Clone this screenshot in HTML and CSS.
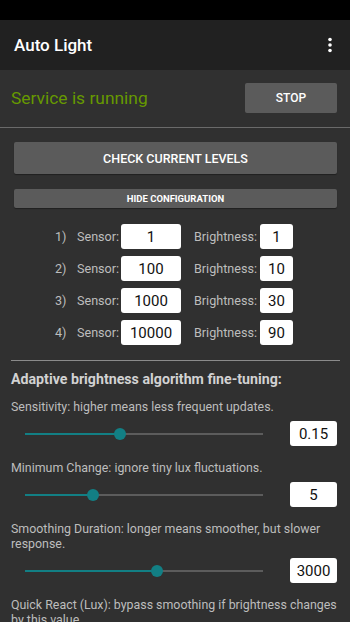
FILE: index.html
```html
<!DOCTYPE html>
<html lang="en">
<head>
    <meta charset="UTF-8">
    <meta name="viewport" content="width=device-width, initial-scale=1.0">
    <title>Auto Light</title>
    <link rel="stylesheet" href="styles.css">
</head>
<body>
    <div class="status-bar"></div>

    <header class="app-bar">
        <h1>Auto Light</h1>
        <svg class="menu-icon" width="6" height="16" viewBox="0 0 6 16">
            <circle cx="3" cy="2.5" r="1.8" fill="#fff"/>
            <circle cx="3" cy="8" r="1.8" fill="#fff"/>
            <circle cx="3" cy="13.5" r="1.8" fill="#fff"/>
        </svg>
    </header>

    <main class="content">
        <div class="service-row">
            <div class="service-text">Service is running</div>
            <button class="btn btn-stop">STOP</button>
        </div>
        <div class="divider-full"></div>

        <div class="panel">
            <button class="btn btn-check">CHECK CURRENT LEVELS</button>
            <button class="btn btn-hide">HIDE CONFIGURATION</button>

            <div class="levels">
                <div class="level-row">
                    <span class="lvl-num">1)</span>
                    <span class="lvl-sensor">Sensor:</span>
                    <div class="field field-sensor">1</div>
                    <span class="lvl-bright">Brightness:</span>
                    <div class="field field-bright">1</div>
                </div>
                <div class="level-row">
                    <span class="lvl-num">2)</span>
                    <span class="lvl-sensor">Sensor:</span>
                    <div class="field field-sensor">100</div>
                    <span class="lvl-bright">Brightness:</span>
                    <div class="field field-bright">10</div>
                </div>
                <div class="level-row">
                    <span class="lvl-num">3)</span>
                    <span class="lvl-sensor">Sensor:</span>
                    <div class="field field-sensor">1000</div>
                    <span class="lvl-bright">Brightness:</span>
                    <div class="field field-bright">30</div>
                </div>
                <div class="level-row">
                    <span class="lvl-num">4)</span>
                    <span class="lvl-sensor">Sensor:</span>
                    <div class="field field-sensor">10000</div>
                    <span class="lvl-bright">Brightness:</span>
                    <div class="field field-bright">90</div>
                </div>
            </div>
        </div>

        <div class="divider-inset"></div>

        <section class="tuning">
            <h2>Adaptive brightness algorithm fine-tuning:</h2>

            <p class="hint">Sensitivity: higher means less frequent updates.</p>
            <div class="slider-row">
                <div class="slider">
                    <div class="slider-fill" style="width: 40%"></div>
                    <div class="slider-thumb" style="left: 40%"></div>
                </div>
                <div class="field field-value">0.15</div>
            </div>

            <p class="hint">Minimum Change: ignore tiny lux fluctuations.</p>
            <div class="slider-row">
                <div class="slider">
                    <div class="slider-fill" style="width: 28.6%"></div>
                    <div class="slider-thumb" style="left: 28.6%"></div>
                </div>
                <div class="field field-value">5</div>
            </div>

            <p class="hint">Smoothing Duration: longer means smoother, but slower response.</p>
            <div class="slider-row">
                <div class="slider">
                    <div class="slider-fill" style="width: 55.5%"></div>
                    <div class="slider-thumb" style="left: 55.5%"></div>
                </div>
                <div class="field field-value">3000</div>
            </div>

            <p class="hint">Quick React (Lux): bypass smoothing if brightness changes by this value</p>
        </section>
    </main>
</body>
</html>
```

FILE: styles.css
```css
* {
    margin: 0;
    padding: 0;
    box-sizing: border-box;
}

body {
    font-family: Roboto, "Liberation Sans", sans-serif;
    width: 350px;
    height: 622px;
    background: #303030;
    overflow: hidden;
}

.status-bar {
    height: 20px;
    background: #000;
}

.app-bar {
    height: 50px;
    background: #212121;
    display: flex;
    align-items: center;
    justify-content: space-between;
    padding: 0 17px 0 14px;
    box-shadow: 0 1px 2px rgba(0, 0, 0, 0.4);
}

.app-bar h1 {
    font-size: 17px;
    font-weight: 500;
    color: #fff;
}

.menu-icon {
    display: block;
}

.content {
    background: #303030;
}

.service-row {
    display: flex;
    align-items: center;
    justify-content: space-between;
    padding: 13px 13px 14px 11px;
}

.service-text {
    font-size: 17.4px;
    color: #669900;
}

.btn {
    font-family: Roboto, "Liberation Sans", sans-serif;
    background: #5b5b5b;
    color: #fff;
    border: none;
    border-radius: 2px;
    font-weight: 500;
    display: block;
}

.btn-stop {
    width: 92px;
    height: 30px;
    font-size: 12px;
}

.divider-full {
    height: 1px;
    background: #6a6a6a;
}

.panel {
    padding: 14px 13px 0 14px;
}

.btn-check {
    width: 100%;
    height: 32px;
    font-size: 12.5px;
    box-shadow: 0 1px 1px rgba(0, 0, 0, 0.35);
}

.btn-hide {
    width: 100%;
    height: 19px;
    font-size: 9.5px;
    font-weight: 700;
    margin-top: 15px;
    box-shadow: 0 1px 1px rgba(0, 0, 0, 0.35);
}

.levels {
    padding-top: 16px;
    display: flex;
    flex-direction: column;
    gap: 7px;
}

.level-row {
    display: flex;
    align-items: center;
    height: 25px;
    padding-left: 41px;
    font-size: 12.6px;
    color: #bdbdbd;
}

.lvl-num {
    width: 22px;
}

.lvl-sensor {
    width: 44px;
}

.lvl-bright {
    width: 66px;
    margin-left: 13px;
}

.field {
    background: #fff;
    color: #111;
    border-radius: 3px;
    height: 25px;
    display: flex;
    align-items: center;
    justify-content: center;
    font-size: 15px;
}

.field-sensor {
    width: 60px;
}

.field-bright {
    width: 33px;
}

.divider-inset {
    height: 1px;
    background: #8a8a8a;
    margin: 15px 10px 0 11px;
}

.tuning {
    padding: 8px 4px 0 11px;
}

.tuning h2 {
    font-size: 14.2px;
    font-weight: 700;
    color: #d2d2d2;
    line-height: 20px;
}

.hint {
    font-size: 12.4px;
    color: #bdbdbd;
    line-height: 15px;
    margin-top: 10px;
}

.slider-row + .hint {
    margin-top: 14px;
}

.slider-row {
    display: flex;
    align-items: center;
    justify-content: space-between;
    margin-top: 7px;
    padding-left: 14px;
    padding-right: 9px;
}

.slider {
    position: relative;
    width: 238px;
    height: 2px;
    background: #5c5c5c;
}

.slider-fill {
    height: 2px;
    background: #127f84;
}

.slider-thumb {
    position: absolute;
    top: -5px;
    width: 12px;
    height: 12px;
    margin-left: -6px;
    border-radius: 50%;
    background: #127f84;
}

.field-value {
    width: 47px;
}
```
